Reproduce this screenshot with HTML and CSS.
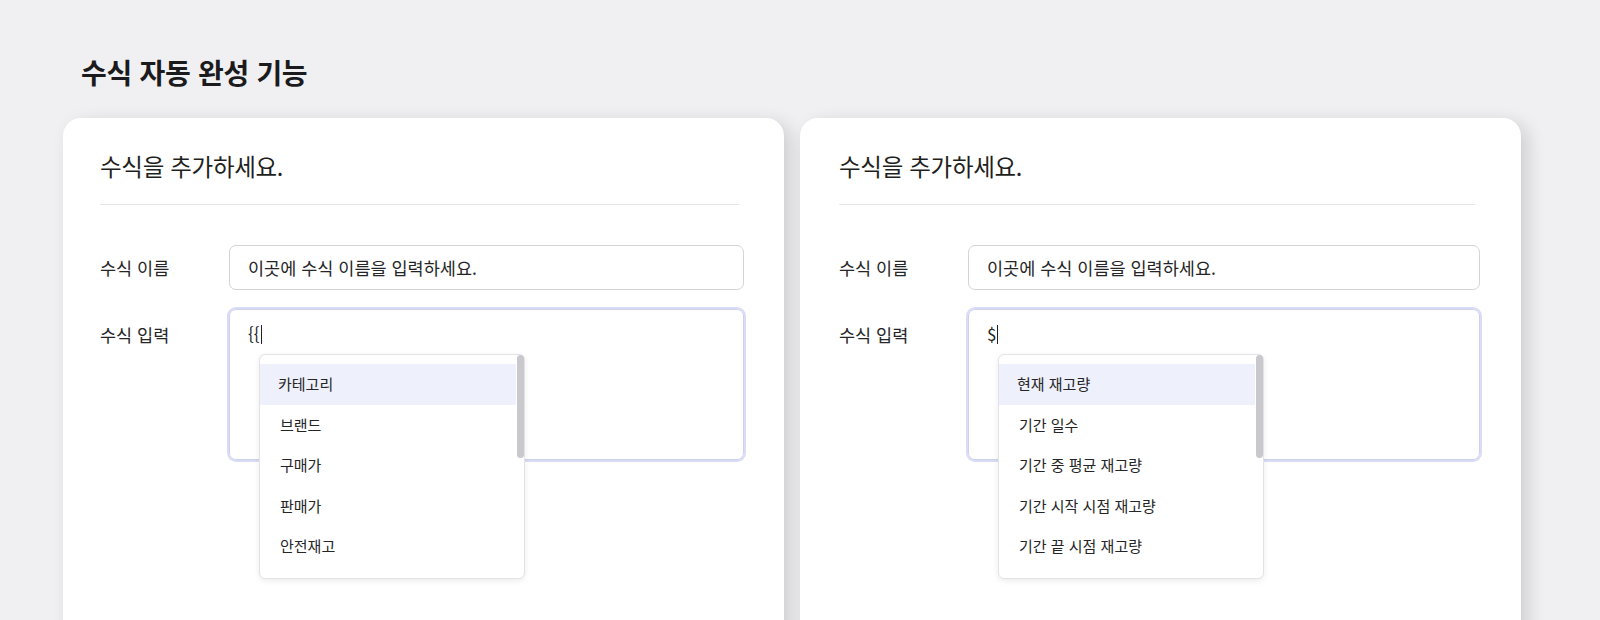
FILE: index.html
```html
<!DOCTYPE html>
<html lang="ko">
<head>
    <meta charset="UTF-8">
    <meta name="viewport" content="width=device-width, initial-scale=1.0">
    <title>수식 자동 완성 기능</title>
    <link rel="stylesheet" href="styles.css">
</head>
<body>
    <main class="page">
        <h1 class="page-title">수식 자동 완성 기능</h1>

        <div class="cards">
            <!-- 변수 자동 완성 ({{ 입력) -->
            <section class="card">
                <h2 class="card-title">수식을 추가하세요.</h2>
                <div class="divider"></div>

                <div class="form-row">
                    <label class="form-label">수식 이름</label>
                    <div class="text-input">이곳에 수식 이름을 입력하세요.</div>
                </div>

                <div class="form-row">
                    <label class="form-label formula-label">수식 입력</label>
                    <div class="formula-box">
                        <div class="formula-text">{{<span class="caret"></span></div>
                        <div class="suggest">
                            <ul class="suggest-list">
                                <li class="active">카테고리</li>
                                <li>브랜드</li>
                                <li>구매가</li>
                                <li>판매가</li>
                                <li>안전재고</li>
                            </ul>
                            <div class="suggest-thumb"></div>
                        </div>
                    </div>
                </div>
            </section>

            <!-- 지표 자동 완성 ($ 입력) -->
            <section class="card">
                <h2 class="card-title">수식을 추가하세요.</h2>
                <div class="divider"></div>

                <div class="form-row">
                    <label class="form-label">수식 이름</label>
                    <div class="text-input">이곳에 수식 이름을 입력하세요.</div>
                </div>

                <div class="form-row">
                    <label class="form-label formula-label">수식 입력</label>
                    <div class="formula-box">
                        <div class="formula-text">$<span class="caret"></span></div>
                        <div class="suggest">
                            <ul class="suggest-list">
                                <li class="active">현재 재고량</li>
                                <li>기간 일수</li>
                                <li>기간 중 평균 재고량</li>
                                <li>기간 시작 시점 재고량</li>
                                <li>기간 끝 시점 재고량</li>
                            </ul>
                            <div class="suggest-thumb"></div>
                        </div>
                    </div>
                </div>
            </section>
        </div>
    </main>
</body>
</html>
```

FILE: styles.css
```css
* {
    margin: 0;
    padding: 0;
    box-sizing: border-box;
}

body {
    background: #f0f0f2;
    color: #222;
    font-family: "Noto Sans CJK KR", "Noto Sans", sans-serif;
    height: 620px;
    overflow: hidden;
}

.page {
    padding: 52px 0 0 63px;
}

.page-title {
    font-size: 28px;
    font-weight: 700;
    color: #1b1b1d;
    padding-left: 18px;
    line-height: 40px;
    letter-spacing: -0.3px;
}

.cards {
    display: flex;
    gap: 16px;
    margin-top: 26px;
}

.card {
    width: 721px;
    height: 560px;
    background: #fff;
    border-radius: 18px;
    padding: 30px 40px 0 37px;
    box-shadow: 7px 5px 18px rgba(0, 0, 0, 0.14);
}

.card + .card {
    padding-left: 39px;
    padding-right: 41px;
}

.card-title {
    font-size: 23.5px;
    font-weight: 400;
    color: #1f1f21;
    line-height: 36px;
    letter-spacing: -0.3px;
}

.divider {
    height: 1px;
    background: #e6e6e9;
    margin: 20px 5px 40px 0;
}

.form-row {
    display: flex;
    align-items: flex-start;
    margin-bottom: 19px;
}

.form-label {
    width: 129px;
    flex-shrink: 0;
    font-size: 17.5px;
    line-height: 45px;
    color: #252527;
}

.formula-label {
    padding-top: 3px;
}

.text-input {
    flex: 1;
    height: 45px;
    border: 1px solid #d3d3d8;
    border-radius: 7px;
    padding: 0 18px;
    font-size: 17.5px;
    line-height: 43px;
    color: #252527;
}

.formula-box {
    position: relative;
    flex: 1;
    height: 151px;
    border: 1px solid #cfd2e6;
    border-radius: 7px;
    box-shadow: 0 0 0 2px #d9dcf8;
    padding: 8px 18px;
}

.formula-text {
    display: flex;
    align-items: center;
    font-size: 17px;
    line-height: 32px;
    color: #252527;
}

.caret {
    display: inline-block;
    width: 0;
    height: 19px;
    border-left: 1.5px solid #222;
    margin-left: 1px;
}

/* 자동 완성 목록 */
.suggest {
    position: absolute;
    left: 29px;
    top: 44px;
    width: 266px;
    height: 225px;
    background: #fff;
    border: 1px solid #e3e3e7;
    border-radius: 6px;
    box-shadow: 0 2px 6px rgba(0, 0, 0, 0.08);
    padding: 9px 8px 0 0;
    z-index: 10;
}

.suggest-list {
    list-style: none;
}

.suggest-list li {
    height: 40.5px;
    line-height: 40.5px;
    padding-left: 20px;
    font-size: 15px;
    color: #252527;
}

.suggest-list li.active {
    background: #eef0fc;
    padding-left: 18px;
}

.suggest-thumb {
    position: absolute;
    top: 0;
    right: 0;
    width: 7px;
    height: 103px;
    background: #c8c8cd;
    border-radius: 4px;
}
```
